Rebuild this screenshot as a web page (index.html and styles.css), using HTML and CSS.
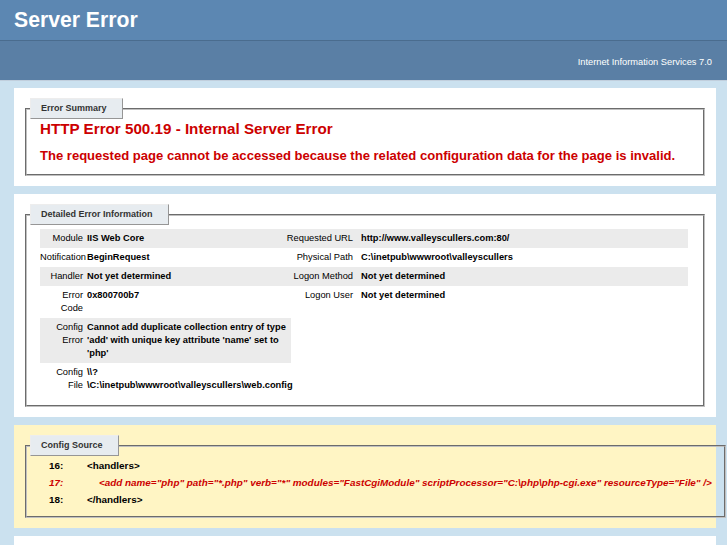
FILE: index.html
```html
<!DOCTYPE html>
<html lang="en">
<head>
<meta charset="utf-8">
<title>IIS 7.0 Detailed Error - 500.19 - Internal Server Error</title>
<link rel="stylesheet" href="styles.css">
</head>
<body>
<div class="header"><h1 class="title">Server Error</h1></div>
<div class="server-version"><p class="version-text">Internet Information Services 7.0</p></div>
<div class="content">
  <div class="container">
    <fieldset class="box box-summary">
      <legend class="box-title">Error Summary</legend>
      <h2 class="err-title">HTTP Error 500.19 - Internal Server Error</h2>
      <h3 class="err-desc">The requested page cannot be accessed because the related configuration data for the page is invalid.</h3>
    </fieldset>
  </div>
  <div class="container">
    <fieldset class="box">
      <legend class="box-title">Detailed Error Information</legend>
      <div class="details">
        <table class="info info-left">
          <tr class="alt"><th>Module</th><td>IIS Web Core</td></tr>
          <tr><th>Notification</th><td>BeginRequest</td></tr>
          <tr class="alt"><th>Handler</th><td>Not yet determined</td></tr>
          <tr><th>Error Code</th><td>0x800700b7</td></tr>
          <tr class="alt"><th>Config Error</th><td>Cannot add duplicate collection entry of type 'add' with unique key attribute 'name' set to 'php'</td></tr>
          <tr><th>Config File</th><td>\\?<wbr>\C:\inetpub\wwwroot\valleyscullers\web.config</td></tr>
        </table>
        <table class="info info-right">
          <tr class="alt"><th>Requested URL</th><td>http://www.valleyscullers.com:80/</td></tr>
          <tr><th>Physical Path</th><td>C:\inetpub\wwwroot\valleyscullers</td></tr>
          <tr class="alt"><th>Logon Method</th><td>Not yet determined</td></tr>
          <tr><th>Logon User</th><td>Not yet determined</td></tr>
        </table>
      </div>
    </fieldset>
  </div>
  <div class="container config-source">
    <fieldset class="box box-source">
      <legend class="box-title">Config Source</legend>
      <div class="source">
        <div class="line"><span class="ln">16:</span><code class="code">&lt;handlers&gt;</code></div>
        <div class="line highlight"><span class="ln">17:</span><code class="code indent">&lt;add name="php" path="*.php" verb="*" modules="FastCgiModule" scriptProcessor="C:\php\php-cgi.exe" resourceType="File" /&gt;</code></div>
        <div class="line"><span class="ln">18:</span><code class="code">&lt;/handlers&gt;</code></div>
      </div>
    </fieldset>
  </div>
  <div class="container container-next"></div>
</div>
</body>
</html>
```

FILE: styles.css
```css
html, body {
  margin: 0;
  padding: 0;
}

body {
  background: #CBE1EF;
  font-family: "Liberation Sans", Arial, Helvetica, sans-serif;
  font-size: 9.3px;
  color: #000;
}

.header {
  background: #5C87B2;
  height: 40px;
  padding: 0 14px;
}

.title {
  margin: 0;
  color: #fff;
  font-size: 21.2px;
  font-weight: bold;
  line-height: 40px;
}

.server-version {
  background: #5A7FA5;
  border-top: 1px solid #4A6C8E;
  border-bottom: 1px solid #C1CFDD;
  height: 37px;
  padding: 2px 15px 0 14px;
  color: #fff;
  text-align: right;
}

.version-text {
  margin: 0;
  line-height: 39px;
}

.content {
  margin: 7px 11px 0 14px;
}

.container {
  background: #fff;
  padding: 10px;
  margin-bottom: 8px;
}

.container-next {
  height: 60px;
}

.config-source {
  background: #FFF5C4;
}

.box {
  margin: 0 1px;
  padding: 0 15px 10px 13px;
  border: 2px groove #c0c0c0;
}

.box-summary {
  padding-bottom: 11px;
}

.box-source {
  padding-right: 12px;
  padding-bottom: 8px;
}

.box-title {
  color: #333;
  font-weight: bold;
  font-size: 9px;
  line-height: 11px;
  padding: 4px 15px 4px 10px;
  margin: 0 0 1px -10px;
  background: #E7ECF0;
  border-top: 1px solid #EDEDED;
  border-left: 1px solid #EDEDED;
  border-right: 1px solid #969696;
  border-bottom: 1px solid #969696;
}

.err-title {
  margin: 0;
  font-size: 15.2px;
  color: #CC0000;
}

.err-desc {
  margin: 12px 0 0;
  font-size: 13.06px;
  line-height: 14px;
  color: #CC0000;
}

.details {
  display: grid;
  grid-template-columns: 231px 1fr;
  align-items: start;
  margin-top: 3px;
}

.info {
  border-collapse: collapse;
  border-spacing: 0;
  table-layout: fixed;
}

.info th,
.info td {
  vertical-align: top;
  padding: 3px 0;
  line-height: 13px;
  text-align: left;
  font-weight: bold;
}

.info th {
  text-align: right;
  font-weight: normal;
  box-sizing: border-box;
}

.info-left {
  width: 251px;
}

.info-left th {
  width: 47px;
  padding-right: 4px;
}

.info-right {
  width: 100%;
}

.info-right th {
  width: 90px;
  padding-right: 8px;
}

.info tr.alt th,
.info tr.alt td {
  background: #EBEBEB;
}

.source {
  font-size: 9.9px;
  font-weight: bold;
  line-height: 17px;
  white-space: nowrap;
}

.line {
  display: flex;
}

.ln {
  width: 38px;
  padding-left: 9px;
  flex: none;
}

.code {
  font-family: inherit;
  font-size: inherit;
}

.indent {
  padding-left: 12px;
}

.highlight {
  color: #CC0000;
  font-style: italic;
}
```
